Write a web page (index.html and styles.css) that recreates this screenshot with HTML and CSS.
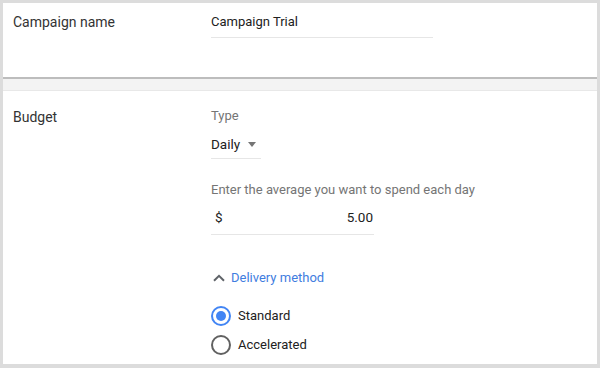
FILE: index.html
```html
<!DOCTYPE html>
<html lang="en">
<head>
  <meta charset="UTF-8" />
  <title>Campaign settings</title>
  <link rel="stylesheet" href="styles.css">
</head>
<body>
  <div class="frame">
    <div class="card card-name">
      <div class="row">
        <div class="label">Campaign name</div>
        <div class="value">
          <div class="field field-name">Campaign Trial</div>
        </div>
      </div>
    </div>

    <div class="gap"></div>

    <div class="card card-budget">
      <div class="row">
        <div class="label label-budget">Budget</div>
        <div class="value">
          <div class="caption">Type</div>
          <div class="field field-type">
            Daily
            <span class="caret"></span>
          </div>
          <div class="caption hint">Enter the average you want to spend each day</div>
          <div class="field field-amount">
            <span>$</span>
            <span>5.00</span>
          </div>

          <div class="toggle">
            <svg width="12" height="8" viewBox="0 0 12 8">
              <path d="M1 6.8 L6 1.8 L11 6.8" fill="none" stroke="#5f6368" stroke-width="2"/>
            </svg>
            Delivery method
          </div>

          <label class="radio checked"><span class="dot"></span>Standard</label>
          <label class="radio"><span class="dot"></span>Accelerated</label>
        </div>
      </div>
    </div>
  </div>
</body>
</html>
```

FILE: styles.css
```css
* {
  box-sizing: border-box;
  font-family: Roboto, 'Liberation Sans', sans-serif;
}

body {
  margin: 0;
  background-color: #dcdcdc;
  padding: 3px 3px 4px 3px;
  height: 368px;
  overflow: hidden;
}

.frame {
  height: 361px;
  background-color: #fff;
  display: flex;
  flex-direction: column;
}

.card {
  background-color: #fff;
}

.card-name {
  height: 76px;
  padding-top: 9px;
  border-bottom: 2px solid #bdbdbd;
}

.gap {
  height: 12px;
  background-color: #f3f3f3;
  border-bottom: 1px solid #e8e8e8;
}

.card-budget {
  flex-grow: 1;
  padding-top: 15px;
}

.row {
  display: grid;
  grid-template-columns: 208px 1fr;
}

.label {
  padding-left: 10px;
  font-size: 14px;
  line-height: 20px;
  color: #333;
}

.label-budget {
  padding-top: 1px;
}

.field {
  font-size: 13px;
  line-height: 20px;
  color: #212121;
  border-bottom: 1px solid #e6e6e6;
}

.field-name {
  width: 222px;
  padding-bottom: 5px;
}

.caption {
  font-size: 13px;
  line-height: 20px;
  color: #757575;
}

.field-type {
  width: 50px;
  margin-top: 8px;
  padding-bottom: 4px;
  display: flex;
  align-items: center;
  font-size: 13.5px;
}

.caret {
  margin-left: 8px;
  border-left: 4px solid transparent;
  border-right: 4px solid transparent;
  border-top: 5px solid #757575;
}

.hint {
  margin-top: 21px;
}

.field-amount {
  width: 163px;
  margin-top: 7px;
  padding: 0 1px 7px 4px;
  display: flex;
  justify-content: space-between;
  font-size: 13.5px;
}

.toggle {
  margin-top: 33px;
  display: flex;
  align-items: center;
  gap: 6px;
  padding-left: 2px;
  font-size: 13px;
  line-height: 20px;
  color: #3f7de0;
}

.radio {
  display: flex;
  align-items: center;
  gap: 7px;
  font-size: 13px;
  line-height: 20px;
  color: #212121;
  margin-top: 9px;
}

.radio:first-of-type {
  margin-top: 18px;
}

.dot {
  width: 20px;
  height: 20px;
  border-radius: 50%;
  border: 2px solid #616161;
  display: flex;
  align-items: center;
  justify-content: center;
}

.radio.checked .dot {
  border-color: #4285f4;
}

.radio.checked .dot::after {
  content: "";
  width: 10px;
  height: 10px;
  border-radius: 50%;
  background-color: #4285f4;
}
```
